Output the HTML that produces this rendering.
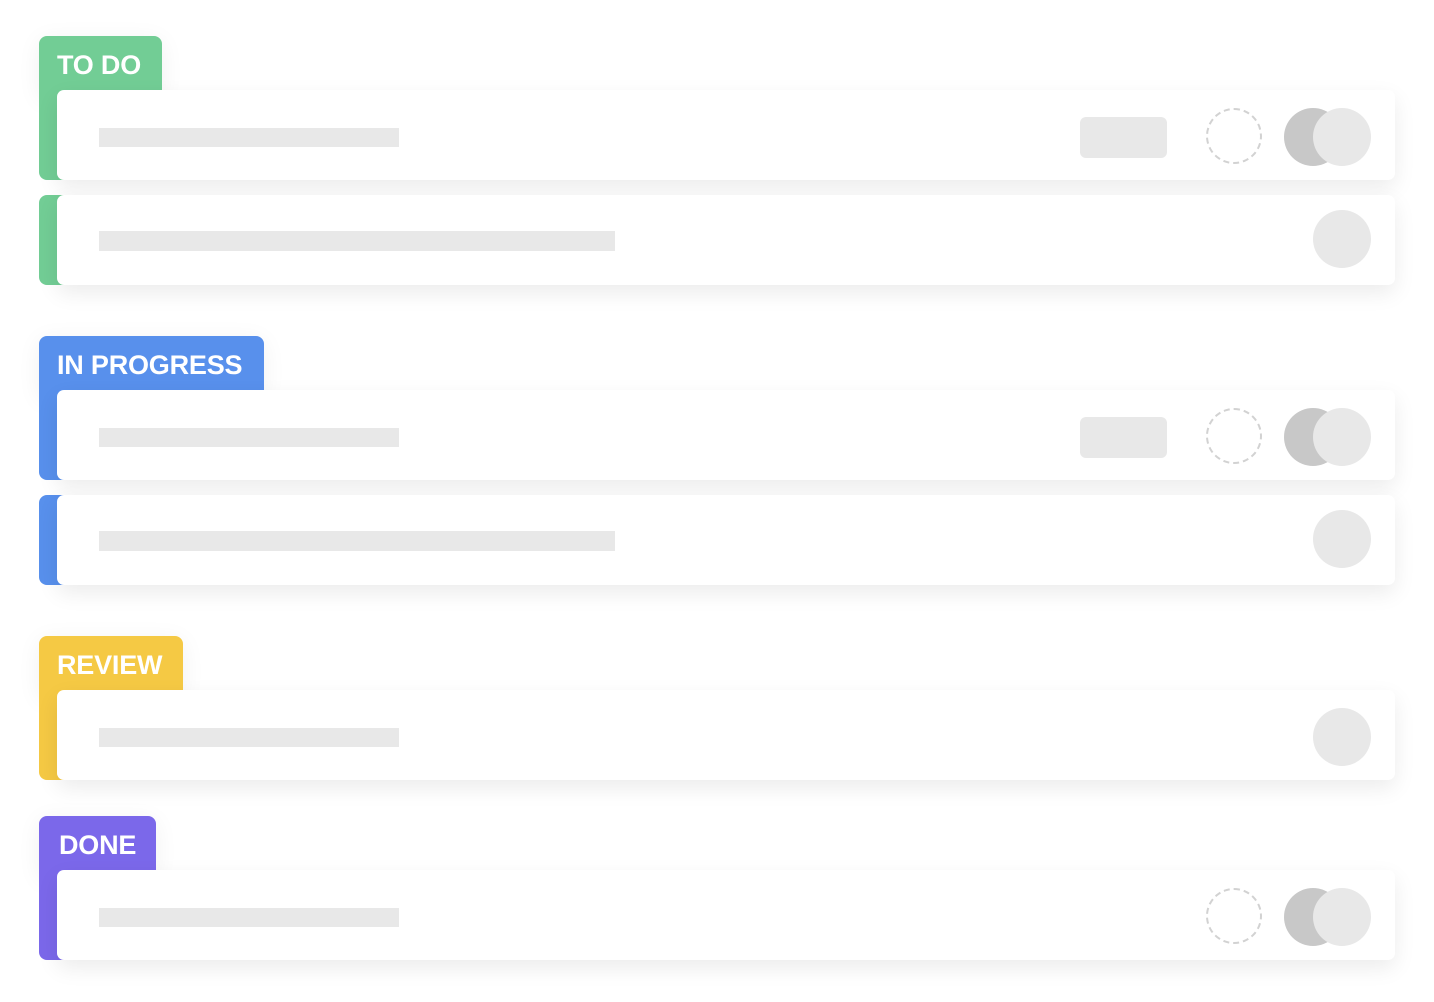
<!DOCTYPE html>
<html><head><meta charset="utf-8"><style>
body{margin:0;width:1434px;height:1002px;background:#fff;position:relative;overflow:hidden;font-family:"Liberation Sans",sans-serif}
.tag{position:absolute;border-radius:8px 8px 0 0;color:#fff;font-weight:bold;font-size:27px;line-height:58px;padding-left:18px;box-sizing:border-box;box-shadow:0 4px 24px rgba(0,0,0,.06);letter-spacing:-0.2px}
.strip{position:absolute;left:39px;width:40px;border-radius:0 0 0 8px}
.card{position:absolute;left:57px;width:1338px;height:90px;background:#fff;border-radius:7px;box-shadow:0 8px 22px rgba(0,0,0,.08)}
.bar{position:absolute;left:42px;height:19px;background:#e8e8e8}
.pill{position:absolute;left:1023px;top:27px;width:87px;height:41px;background:#e8e8e8;border-radius:6px}
.dash{position:absolute;left:1149px;top:18px;width:56px;height:56px;border:2px dashed #d2d2d2;border-radius:50%;box-sizing:border-box}
.c1{position:absolute;left:1227px;top:18px;width:58px;height:58px;border-radius:50%;background:#c8c8c8}
.c2{position:absolute;left:1256px;top:18px;width:58px;height:58px;border-radius:50%;background:#e8e8e8}
</style></head><body>

<div class="tag" style="left:39px;top:36px;width:123px;height:60px;background:#72cd95">TO DO</div>
<div class="strip" style="top:90px;height:90px;background:#72cd95"></div>
<div class="strip" style="top:195px;height:90px;background:#72cd95;border-radius:8px 0 0 8px"></div>
<div class="card" style="top:90px"><div class="bar" style="top:38px;width:300px"></div><div class="pill"></div><div class="dash"></div><div class="c1"></div><div class="c2"></div></div>
<div class="card" style="top:195px"><div class="bar" style="top:36px;width:516px;height:20px"></div><div class="c2" style="top:15px"></div></div>

<div class="tag" style="left:39px;top:336px;width:225px;height:60px;background:#5890ec">IN PROGRESS</div>
<div class="strip" style="top:390px;height:90px;background:#5890ec"></div>
<div class="strip" style="top:495px;height:90px;background:#5890ec;border-radius:8px 0 0 8px"></div>
<div class="card" style="top:390px"><div class="bar" style="top:38px;width:300px"></div><div class="pill"></div><div class="dash"></div><div class="c1"></div><div class="c2"></div></div>
<div class="card" style="top:495px"><div class="bar" style="top:36px;width:516px;height:20px"></div><div class="c2" style="top:15px"></div></div>

<div class="tag" style="left:39px;top:636px;width:144px;height:60px;background:#f5c944">REVIEW</div>
<div class="strip" style="top:690px;height:90px;background:#f5c944"></div>
<div class="card" style="top:690px"><div class="bar" style="top:38px;width:300px"></div><div class="c2" style="top:18px"></div></div>

<div class="tag" style="left:39px;top:816px;width:117px;height:60px;background:#7b68ea;padding-left:20px">DONE</div>
<div class="strip" style="top:870px;height:90px;background:#7b68ea"></div>
<div class="card" style="top:870px"><div class="bar" style="top:38px;width:300px"></div><div class="dash"></div><div class="c1"></div><div class="c2"></div></div>

</body></html>
